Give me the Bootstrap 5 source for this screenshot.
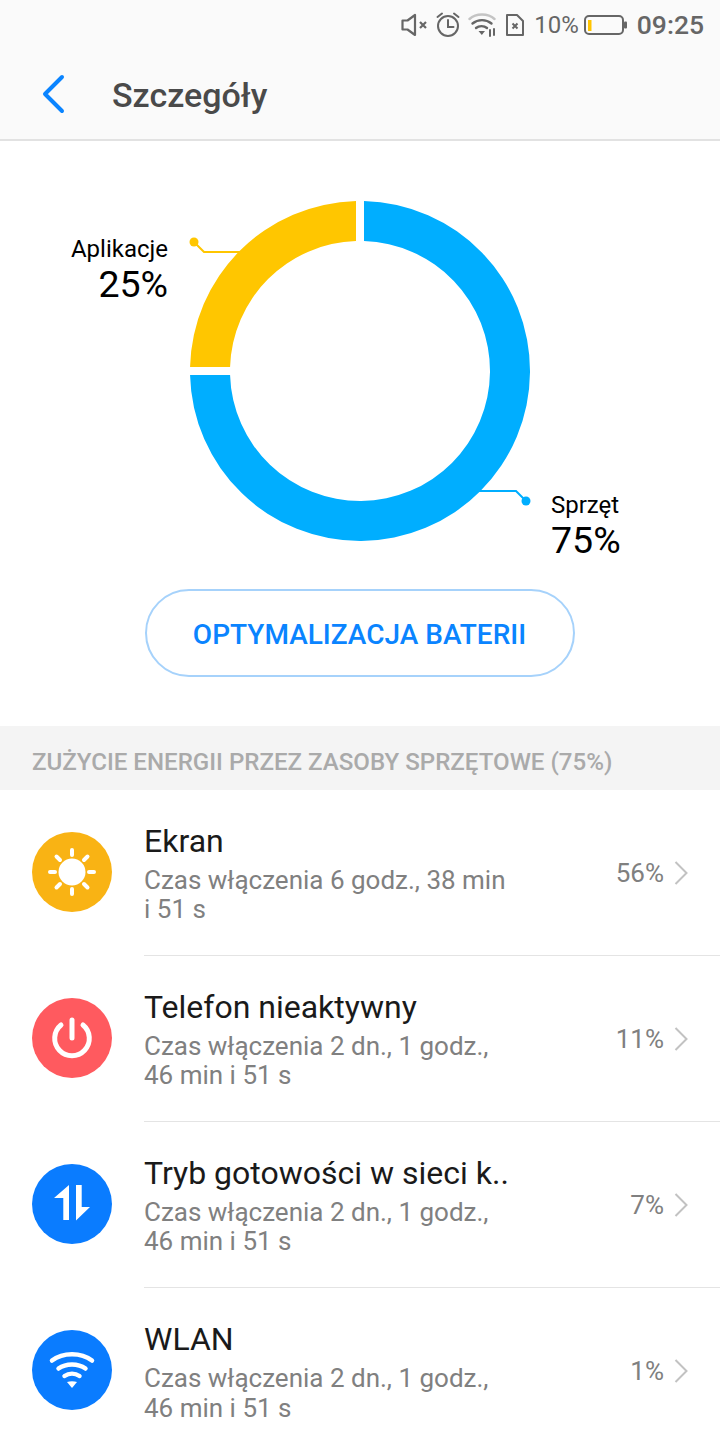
<!DOCTYPE html>
<html lang="pl">
<head>
  <meta charset="UTF-8">
  <meta name="viewport" content="width=device-width, initial-scale=1.0">
  <title>Szczegóły</title>
  <link href="https://cdn.jsdelivr.net/npm/bootstrap@5.3.3/dist/css/bootstrap.min.css" rel="stylesheet">
  <script src="https://cdn.jsdelivr.net/npm/bootstrap@5.3.3/dist/js/bootstrap.bundle.min.js"></script>
  <style>
    html, body { height: 1440px; overflow: hidden; }
    body { font-family: Roboto, "Liberation Sans", sans-serif; background: #fff; color: #1a1a1a; }
    .top-area { background: #fafafa; height: 141px; border-bottom: 2px solid #e2e2e2; }
    .status-row { height: 50px; padding-right: 16px; color: #666; gap: 8px; }
    .status-pct { font-size: 24px; line-height: 1; margin-left: 1px; margin-right: -3px; }
    .status-time { font-size: 26.500px; font-weight: 500; line-height: 1; margin-left: 1px; }
    .head-row { height: 89px; padding-bottom: 2px; }
    .back-ico { margin-left: 41px; width: 26px; height: 40px; }
    .page-title { font-size: 34px; font-weight: 500; color: #4a4a4a; margin: 3px 0 0 45px; line-height: 1; }
    .chart-area { height: 585px; }
    .chart-svg { display: block; width: 720px; height: 424px; }
    .chart-label { position: absolute; color: #000; line-height: 1; }
    .chart-label .lab-name { font-size: 24px; display: block; }
    .chart-label .lab-val { font-size: 37.500px; display: block; margin-top: 5px; }
    .lab-apps { right: 552px; top: 96px; text-align: right; }
    .lab-hw { left: 551px; top: 352px; }
    .opt-btn { width: 430px; height: 88px; margin-right: 1px; padding: 3px 0 0; border: 2px solid #a6d2fb; border-radius: 44px; color: #0a84ff; background: #fff; font-size: 28px; font-weight: 500; }
    .opt-btn:hover { color: #0a84ff; border-color: #a6d2fb; background: #fff; }
    .sect-head { height: 64px; background: #f4f4f4; padding: 8px 0 0 32px; color: #aaa; font-size: 24.100px; font-weight: 500; }
    .usage-item { height: 166px; padding-left: 32px; }
    .usage-ico { width: 80px; height: 80px; flex: none; margin-top: -2px; }
    .usage-body { margin-left: 32px; height: 100%; border-bottom: 1px solid #e4e4e4; padding-right: 32px; }
    .usage-item:last-child .usage-body { border-bottom: 0; }
    .usage-txt { width: 450px; padding-top: 2px; }
    .usage-name { font-size: 32px; line-height: 36px; color: #1a1a1a; }
    .usage-sub { font-size: 26px; line-height: 29.500px; color: #808080; margin-top: 7px; }
    .usage-pct { font-size: 26px; color: #808080; margin-left: auto; line-height: 1; }
    .usage-chev { width: 14px; height: 26px; margin-left: 10px; flex: none; }
  </style>
</head>
<body>
  <div class="top-area">
    <div class="status-row d-flex align-items-center justify-content-end">
      <svg width="27" height="24" viewBox="0 0 27 24" fill="none" stroke="#666" stroke-width="2.200">
        <path d="M1.500 7.500h5L14 2v20l-7.500-5.500h-5z" stroke-linejoin="round"/>
        <path d="M19 9l6 6M25 9l-6 6"/>
      </svg>
      <svg width="24" height="26" viewBox="0 0 24 26" fill="none" stroke="#666" stroke-width="2">
        <circle cx="12" cy="14" r="10"/>
        <path d="M12 8v7h5.500M1.500 5L6 1.500M22.500 5L18 1.500" stroke-linecap="round"/>
      </svg>
      <svg width="29" height="26" viewBox="0 0 29 26" fill="none" stroke-linecap="round">
        <path d="M1.500 7C8 1 20 1 26.500 7" stroke="#c4c4c4" stroke-width="2.400"/>
        <path d="M4.500 11.500C10 7 18 7 23.500 11.500M8 16C11 13.500 16 13.500 19 16" stroke="#666" stroke-width="2.400"/>
        <path d="M10.500 19h6.500l-3.200 4z" fill="#666"/>
        <path d="M22 18v6M26 17v6" stroke="#666" stroke-width="2"/>
      </svg>
      <svg width="20" height="24" viewBox="0 0 20 24" fill="none" stroke="#666" stroke-width="2">
        <path d="M2 2h10l6 6v14H2z" stroke-linejoin="round"/>
        <path d="M7.500 10.500l5 5M12.500 10.500l-5 5"/>
      </svg>
      <span class="status-pct">10%</span>
      <svg width="44" height="20" viewBox="0 0 44 20" fill="none">
        <rect x="1" y="1" width="38" height="18" rx="4" stroke="#666" stroke-width="2"/>
        <rect x="4" y="5" width="3.500" height="11" fill="#ffc400"/>
        <rect x="40" y="6.500" width="3" height="7" rx="1" fill="#666"/>
      </svg>
      <span class="status-time">09:25</span>
    </div>
    <div class="head-row d-flex align-items-center">
      <svg class="back-ico" viewBox="0 0 26 40" fill="none" stroke="#0a84ff" stroke-width="4" stroke-linecap="round" stroke-linejoin="round">
        <path d="M21 3L4 20l17 17"/>
      </svg>
      <h1 class="page-title">Szczegóły</h1>
    </div>
  </div>

  <div class="chart-area position-relative d-flex flex-column align-items-center">
    <svg class="chart-svg" viewBox="0 0 720 424">
      <!-- pierscien: srodek 360,230 r 130-170 -->
      <path d="M364 60.050A170 170 0 1 1 190.050 234H230.060A130 130 0 1 0 364 100.060Z" fill="#00aeff"/>
      <path d="M190.050 226A170 170 0 0 1 356 60.050V100.060A130 130 0 0 0 230.060 226Z" fill="#ffc600"/>
      <path d="M243 111H204L194 101" fill="none" stroke="#ffc600" stroke-width="2"/>
      <circle cx="194" cy="101" r="4.500" fill="#ffc600"/>
      <path d="M478 350H516L526 360" fill="none" stroke="#00aeff" stroke-width="2"/>
      <circle cx="526" cy="360" r="4.500" fill="#00aeff"/>
    </svg>
    <div class="chart-label lab-apps"><span class="lab-name">Aplikacje</span><span class="lab-val">25%</span></div>
    <div class="chart-label lab-hw"><span class="lab-name">Sprzęt</span><span class="lab-val">75%</span></div>
    <button type="button" class="btn opt-btn d-flex align-items-center justify-content-center mt-4">OPTYMALIZACJA BATERII</button>
  </div>

  <div class="sect-head d-flex align-items-center">ZUŻYCIE ENERGII PRZEZ ZASOBY SPRZĘTOWE (75%)</div>

  <div class="usage-list">
    <div class="usage-item d-flex align-items-center">
      <svg class="usage-ico" viewBox="0 0 80 80">
        <circle cx="40" cy="40" r="40" fill="#f9b314"/>
        <circle cx="40" cy="40" r="13.500" fill="#fff"/>
        <path d="M40 18v5M40 57v5M18 40h5M57 40h5M24.500 24.500l3.500 3.500M52 52l3.500 3.500M55.500 24.500l-3.500 3.500M28 52l-3.500 3.500" stroke="#fff" stroke-width="4" stroke-linecap="round" fill="none"/>
      </svg>
      <div class="usage-body flex-grow-1 d-flex align-items-center">
        <div class="usage-txt">
          <div class="usage-name">Ekran</div>
          <div class="usage-sub">Czas włączenia 6 godz., 38 min<br>i 51 s</div>
        </div>
        <span class="usage-pct">56%</span>
        <svg class="usage-chev" viewBox="0 0 14 26" fill="none" stroke="#c2c2c2" stroke-width="2"><path d="M1.500 2l11 11-11 11"/></svg>
      </div>
    </div>
    <div class="usage-item d-flex align-items-center">
      <svg class="usage-ico" viewBox="0 0 80 80">
        <circle cx="40" cy="40" r="40" fill="#ff5a5f"/>
        <path d="M29 27A17.300 17.300 0 1 0 51 27" stroke="#fff" stroke-width="5" stroke-linecap="round" fill="none"/>
        <path d="M40 22v18" stroke="#fff" stroke-width="5" stroke-linecap="round"/>
      </svg>
      <div class="usage-body flex-grow-1 d-flex align-items-center">
        <div class="usage-txt">
          <div class="usage-name">Telefon nieaktywny</div>
          <div class="usage-sub">Czas włączenia 2 dn., 1 godz.,<br>46 min i 51 s</div>
        </div>
        <span class="usage-pct">11%</span>
        <svg class="usage-chev" viewBox="0 0 14 26" fill="none" stroke="#c2c2c2" stroke-width="2"><path d="M1.500 2l11 11-11 11"/></svg>
      </div>
    </div>
    <div class="usage-item d-flex align-items-center">
      <svg class="usage-ico" viewBox="0 0 80 80">
        <circle cx="40" cy="40" r="40" fill="#0a7cff"/>
        <path d="M37 21V56H31.300V34H22Z M44 21H49.700V43H58L44 56.500Z" fill="#fff"/>
      </svg>
      <div class="usage-body flex-grow-1 d-flex align-items-center">
        <div class="usage-txt">
          <div class="usage-name">Tryb gotowości w sieci k..</div>
          <div class="usage-sub">Czas włączenia 2 dn., 1 godz.,<br>46 min i 51 s</div>
        </div>
        <span class="usage-pct">7%</span>
        <svg class="usage-chev" viewBox="0 0 14 26" fill="none" stroke="#c2c2c2" stroke-width="2"><path d="M1.500 2l11 11-11 11"/></svg>
      </div>
    </div>
    <div class="usage-item d-flex align-items-center">
      <svg class="usage-ico" viewBox="0 0 80 80">
        <circle cx="40" cy="40" r="40" fill="#0a7cff"/>
        <path d="M20 30.500C31 22 49 22 60 30.500M26.500 38.500C34 33 46 33 53.500 38.500M32.500 46C37 43 43 43 47.500 46" stroke="#fff" stroke-width="4.500" stroke-linecap="round" fill="none"/>
        <path d="M35 52C38 51 42 51 45 52L40 58Z" fill="#fff"/>
      </svg>
      <div class="usage-body flex-grow-1 d-flex align-items-center">
        <div class="usage-txt">
          <div class="usage-name">WLAN</div>
          <div class="usage-sub">Czas włączenia 2 dn., 1 godz.,<br>46 min i 51 s</div>
        </div>
        <span class="usage-pct">1%</span>
        <svg class="usage-chev" viewBox="0 0 14 26" fill="none" stroke="#c2c2c2" stroke-width="2"><path d="M1.500 2l11 11-11 11"/></svg>
      </div>
    </div>
  </div>
</body>
</html>
